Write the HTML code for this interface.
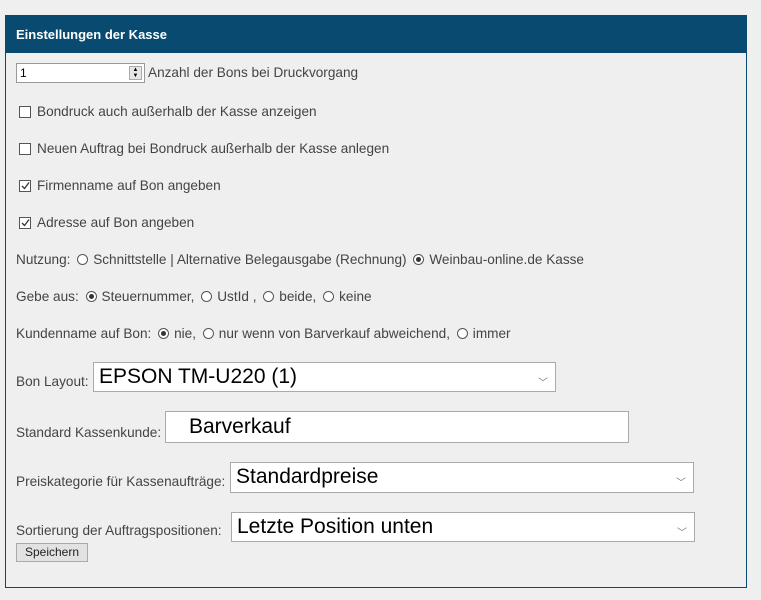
<!DOCTYPE html>
<html><head><meta charset="utf-8"><style>
*{box-sizing:border-box;margin:0;padding:0}
body{width:761px;height:600px;background:#efefef;font-family:"Liberation Sans",sans-serif;font-size:13.6px;color:#444;position:relative;overflow:hidden}
.a{position:absolute;white-space:nowrap}
.panel{left:5px;top:15px;width:742px;height:573px;border:1px solid #0b4a70;background:#efefef}
.hdr{left:5px;top:15px;width:742px;height:38px;background:#084a70;color:#fff;font-weight:bold;font-size:13px;padding:12px 0 0 11px}
.cb{display:inline-block;width:12px;height:12px;border:1px solid #555;background:#fff;vertical-align:-2px;margin-right:6px;position:relative}
.rd{display:inline-block;width:11px;height:11px;border:1px solid #555;border-radius:50%;background:#fff;vertical-align:-1px;margin:0 5px 0 3px;position:relative}
.rd.on::after{content:"";position:absolute;left:2px;top:2px;width:5px;height:5px;border-radius:50%;background:#333}
.box{background:#fff;border:1px solid #aaa;color:#000;font-size:21px;padding-left:5px;line-height:27px}
.chev{position:absolute;right:7px;top:7px;font-size:10px;color:#777}
</style></head><body>
<div class="a panel"></div>
<div class="a hdr">Einstellungen der Kasse</div>
<div class="a" style="left:16px;top:63px;width:129px;height:20px;border:1px solid #999;background:#fff;font-size:12px;color:#000;padding:2px 3px">1
<div style="position:absolute;right:2px;top:2px;width:13px;height:14px;border:1px solid #aaa;background:#e6e6e6;font-size:6px;line-height:6px;text-align:center">▲<br>▼</div></div>
<div class="a" style="left:148px;top:65px">Anzahl der Bons bei Druckvorgang</div>
<div class="a" style="left:19px;top:104px"><span class="cb"></span>Bondruck auch außerhalb der Kasse anzeigen</div>
<div class="a" style="left:19px;top:141px"><span class="cb"></span>Neuen Auftrag bei Bondruck außerhalb der Kasse anlegen</div>
<div class="a" style="left:19px;top:178px"><span class="cb"><svg width="10" height="10" style="position:absolute;left:0;top:0"><path d="M2 5 L4.5 7.5 L9 1.5" stroke="#333" stroke-width="1.3" fill="none"/></svg></span>Firmenname auf Bon angeben</div>
<div class="a" style="left:19px;top:215px"><span class="cb"><svg width="10" height="10" style="position:absolute;left:0;top:0"><path d="M2 5 L4.5 7.5 L9 1.5" stroke="#333" stroke-width="1.3" fill="none"/></svg></span>Adresse auf Bon angeben</div>
<div class="a" style="left:16px;top:252px">Nutzung: <span class="rd"></span>Schnittstelle | Alternative Belegausgabe (Rechnung) <span class="rd on"></span>Weinbau-online.de Kasse</div>
<div class="a" style="left:16px;top:289px">Gebe aus: <span class="rd on"></span>Steuernummer, <span class="rd"></span>UstId , <span class="rd"></span>beide, <span class="rd"></span>keine</div>
<div class="a" style="left:16px;top:326px">Kundenname auf Bon: <span class="rd on"></span>nie, <span class="rd"></span>nur wenn von Barverkauf abweichend, <span class="rd"></span>immer</div>
<div class="a" style="left:16px;top:374px">Bon Layout:</div>
<div class="a box" style="left:93px;top:362px;width:463px;height:30px">EPSON TM-U220 (1)<span class="chev">﹀</span></div>
<div class="a" style="left:16px;top:425px">Standard Kassenkunde:</div>
<div class="a box" style="left:165px;top:411px;width:464px;height:32px;padding-left:23px;line-height:30px">Barverkauf</div>
<div class="a" style="left:16px;top:474px">Preiskategorie für Kassenaufträge:</div>
<div class="a box" style="left:230px;top:462px;width:464px;height:31px">Standardpreise<span class="chev">﹀</span></div>
<div class="a" style="left:16px;top:523px">Sortierung der Auftragspositionen:</div>
<div class="a box" style="left:231px;top:512px;width:464px;height:30px">Letzte Position unten<span class="chev">﹀</span></div>
<div class="a" style="left:16px;top:543px;width:72px;height:19px;border:1px solid #aaa;background:#e2e2e2;font-size:12px;color:#222;text-align:center;line-height:17px">Speichern</div>
</body></html>
